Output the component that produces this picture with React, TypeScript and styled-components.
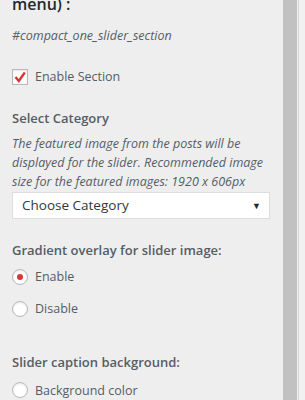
import React from 'react';
import styled, { createGlobalStyle } from 'styled-components';

const GlobalStyle = createGlobalStyle`
  html, body {
    margin: 0;
    padding: 0;
    background: #eeeeee;
  }
  body {
    font-family: "Segoe UI", "Open Sans", "Noto Sans", sans-serif;
    overflow: hidden;
  }
`;

const Frame = styled.div`
  display: flex;
  width: 305px;
  height: 400px;
  overflow: hidden;
  background: #eeeeee;
`;

const Panel = styled.div`
  flex: 1;
  display: flex;
  flex-direction: column;
  padding-left: 12px;
  padding-right: 13px;
`;

const Scrollbar = styled.div`
  width: 22px;
  display: flex;
  background: #f1f1f1;
`;

const Thumb = styled.div`
  width: 14px;
  background: #c1c1c1;
`;

const TrackLine = styled.div`
  width: 1px;
  margin-left: 1px;
  background: #d4d4d4;
`;

const SectionTitle = styled.div`
  margin-top: -6px;
  font-size: 16px;
  font-weight: 600;
  line-height: 20px;
  color: #23282d;
`;

const Description = styled.div<{ $gap: number }>`
  margin-top: ${(p) => p.$gap}px;
  font-size: 12.5px;
  font-style: italic;
  line-height: 19px;
  color: #555d66;
`;

const Heading = styled.div<{ $gap: number }>`
  margin-top: ${(p) => p.$gap}px;
  font-size: 13px;
  font-weight: 600;
  line-height: 20px;
  color: #555d66;
`;

const OptionRow = styled.label<{ $gap: number }>`
  margin-top: ${(p) => p.$gap}px;
  display: flex;
  align-items: center;
  gap: 7px;
  height: 20px;
  font-size: 12.5px;
  color: #555d66;
`;

const CheckBox = styled.span`
  width: 14px;
  height: 14px;
  border: 1px solid #b4b9be;
  background: #ffffff;
  box-shadow: inset 0 1px 2px rgba(0, 0, 0, 0.1);
  display: flex;
  align-items: center;
  justify-content: center;
`;

const Radio = styled.span<{ $checked?: boolean }>`
  width: 14px;
  height: 14px;
  border-radius: 50%;
  border: 1px solid #b4b9be;
  background: #ffffff;
  box-shadow: inset 0 1px 2px rgba(0, 0, 0, 0.1);
  display: flex;
  align-items: center;
  justify-content: center;

  &::after {
    content: '';
    display: ${(p) => (p.$checked ? 'block' : 'none')};
    width: 6px;
    height: 6px;
    border-radius: 50%;
    background: #dd3333;
  }
`;

const Select = styled.div`
  margin-top: 1px;
  height: 26px;
  display: flex;
  align-items: center;
  justify-content: space-between;
  padding: 0 8px 0 9px;
  background: #ffffff;
  border: 1px solid #dddddd;
  font-size: 13.5px;
  color: #32373c;
`;

const Arrow = styled.span`
  font-size: 9px;
  color: #23282d;
`;

function CheckMark() {
  return (
    <svg width="14" height="14" viewBox="0 0 14 14">
      <path d="M2.5 7 L5.8 11 L11.8 2.5" fill="none" stroke="#dd3333" strokeWidth="2.4" />
    </svg>
  );
}

export default function App() {
  return (
    <Frame>
      <GlobalStyle />
      <Panel>
        <SectionTitle>menu) :</SectionTitle>
        <Description $gap={12}>#compact_one_slider_section</Description>

        <OptionRow $gap={22}>
          <CheckBox>
            <CheckMark />
          </CheckBox>
          Enable Section
        </OptionRow>

        <Heading $gap={21}>Select Category</Heading>
        <Description $gap={6}>
          The featured image from the posts will be displayed for the slider. Recommended image
          size for the featured images: 1920 x 606px
        </Description>
        <Select>
          Choose Category
          <Arrow>▼</Arrow>
        </Select>

        <Heading $gap={21}>Gradient overlay for slider image:</Heading>
        <OptionRow $gap={7}>
          <Radio $checked />
          Enable
        </OptionRow>
        <OptionRow $gap={12}>
          <Radio />
          Disable
        </OptionRow>

        <Heading $gap={34}>Slider caption background:</Heading>
        <OptionRow $gap={8}>
          <Radio />
          Background color
        </OptionRow>
      </Panel>
      <Scrollbar>
        <Thumb />
        <TrackLine />
      </Scrollbar>
    </Frame>
  );
}
